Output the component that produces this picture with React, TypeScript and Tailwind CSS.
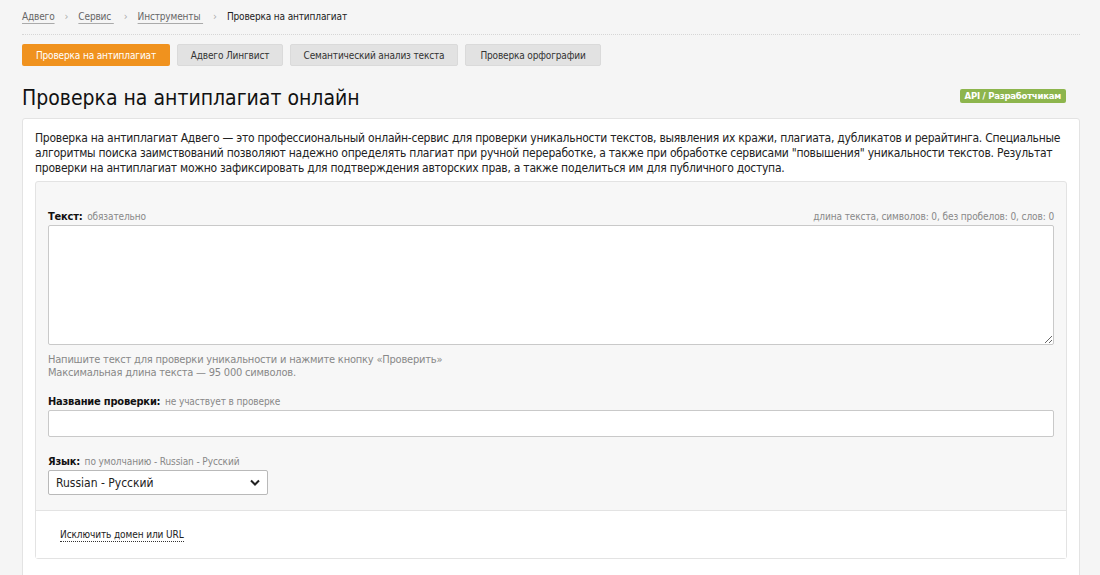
import React from "react";

const font = { fontFamily: '"DejaVu Sans Condensed", "DejaVu Sans", sans-serif' };

function Crumb({ children }: { children: React.ReactNode }) {
  return (
    <a className="text-[#666] underline decoration-[#aaa] underline-offset-[3px] whitespace-pre">{children}</a>
  );
}

function Sep() {
  return <span className="mx-[10px] text-[#aaa] text-[11px]">›</span>;
}

export default function App() {
  const tabs = [
    { label: "Адвего Лингвист", w: "w-[106px]" },
    { label: "Семантический анализ текста", w: "w-[168px]" },
    { label: "Проверка орфографии", w: "w-[136px]" },
  ];
  return (
    <div className="h-[575px] bg-[#f5f5f5] text-[#222] overflow-hidden" style={font}>
      <div className="w-[1058px] ml-[22px]">
        {/* breadcrumbs */}
        <div className="pt-[10px] pb-[10px] text-[10px] tracking-[-0.15px] leading-[14px] flex items-center border-b border-dotted border-[#d6d6d6]">
          <Crumb>Адвего</Crumb>
          <Sep />
          <Crumb>Сервис </Crumb>
          <Sep />
          <Crumb>Инструменты </Crumb>
          <Sep />
          <span className="text-[#222]">Проверка на антиплагиат</span>
        </div>

        {/* tool tabs */}
        <div className="mt-[9px] flex gap-[7px] text-[10px] tracking-[-0.15px]">
          <div className="w-[148px] h-[22px] flex items-center justify-center rounded-[2px] bg-[#f0921e] text-white">
            Проверка на антиплагиат
          </div>
          {tabs.map((t) => (
            <div
              key={t.label}
              className={`${t.w} h-[22px] flex items-center justify-center rounded-[2px] bg-[#e2e2e2] text-[#333] border border-[#dadada]`}
            >
              {t.label}
            </div>
          ))}
        </div>

        {/* heading */}
        <div className="mt-[18px] flex items-start justify-between">
          <h1 className="text-[21px] leading-[28px] text-[#111]">Проверка на антиплагиат онлайн</h1>
          <span className="mt-[5px] mr-[14px] rounded-[2px] bg-[#8db54d] text-white text-[9.5px] leading-[14px] px-[5px] font-bold tracking-[-0.25px]">
            API / Разработчикам
          </span>
        </div>

        {/* main panel */}
        <div className="mt-[6px] h-[480px] bg-white border border-[#e3e3e3] rounded-[3px] pt-[12px] pl-[12px] pr-[12px]">
          <p className="text-[12px] tracking-[-0.25px] leading-[15px] text-[#222]">
            Проверка на антиплагиат Адвего — это профессиональный онлайн-сервис для проверки уникальности текстов, выявления их кражи, плагиата, дубликатов и рерайтинга. Специальные алгоритмы поиска заимствований позволяют надежно определять плагиат при ручной переработке, а также при обработке сервисами "повышения" уникальности текстов. Результат проверки на антиплагиат можно зафиксировать для подтверждения авторских прав, а также поделиться им для публичного доступа.
          </p>

          <div className="mt-[5px] border border-[#e3e3e3] rounded-[3px] bg-[#f7f7f7]">
            <div className="px-[12px] pt-[26px] pb-[15px]">
              <div className="flex justify-between items-end leading-[14px]">
                <div>
                  <span className="text-[#111] text-[11px] font-bold tracking-[-0.2px]">Текст:</span>{" "}
                  <span className="text-[#888] text-[10px] tracking-[-0.1px]">обязательно</span>
                </div>
                <span className="text-[#888] text-[10px] tracking-[-0.1px]">
                  длина текста, символов: 0, без пробелов: 0, слов: 0
                </span>
              </div>
              <textarea className="mt-[1px] block w-full h-[120px] bg-white border border-[#c9c9c9] rounded-[2px] resize-y" />
              <div className="mt-[8px] text-[11px] tracking-[-0.2px] leading-[13px] text-[#888]">
                Напишите текст для проверки уникальности и нажмите кнопку «Проверить»
                <br />
                Максимальная длина текста — 95 000 символов.
              </div>

              <div className="mt-[14px] leading-[14px]">
                <span className="text-[#111] text-[11px] font-bold tracking-[-0.2px]">Название проверки:</span>{" "}
                <span className="text-[#888] text-[10px] tracking-[-0.1px]">не участвует в проверке</span>
              </div>
              <input className="mt-[1px] block w-full h-[27px] bg-white border border-[#c9c9c9] rounded-[2px]" />

              <div className="mt-[16px] leading-[14px]">
                <span className="text-[#111] text-[11px] font-bold tracking-[-0.2px]">Язык:</span>{" "}
                <span className="text-[#888] text-[10px] tracking-[-0.1px]">по умолчанию - Russian - Русский</span>
              </div>
              <div className="mt-[1px] w-[220px] h-[25px] bg-white border border-[#b9b9b9] rounded-[2px] flex items-center justify-between px-[7px] text-[12px]">
                <span>Russian - Русский</span>
                <svg width="10" height="7" viewBox="0 0 10 7">
                  <path d="M1 1.5 L5 5.5 L9 1.5" fill="none" stroke="#222" strokeWidth="2" />
                </svg>
              </div>
            </div>
            <div className="border-t border-[#e3e3e3] bg-white h-[48px] px-[24px] flex items-center text-[10px] tracking-[-0.1px]">
              <span className="border-b border-dotted border-[#333] text-[#222] leading-[13px]">Исключить домен или URL</span>
            </div>
          </div>
        </div>
      </div>
    </div>
  );
}
